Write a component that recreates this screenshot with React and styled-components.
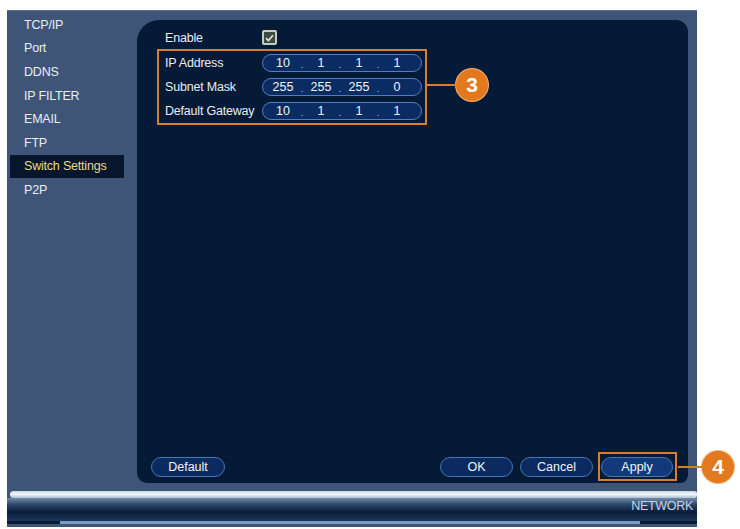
import React from "react";
import styled, { createGlobalStyle } from "styled-components";

const menu = ["TCP/IP", "Port", "DDNS", "IP FILTER", "EMAIL", "FTP", "Switch Settings", "P2P"];

const fields = [
  { label: "IP Address", value: ["10", "1", "1", "1"] },
  { label: "Subnet Mask", value: ["255", "255", "255", "0"] },
  { label: "Default Gateway", value: ["10", "1", "1", "1"] },
];

const GlobalStyle = createGlobalStyle`
  html, body {
    margin: 0;
    padding: 0;
    background: #ffffff;
    font-family: "Liberation Sans", Arial, sans-serif;
    font-size: 12.5px;
  }
`;

const Frame = styled.div`
  position: relative;
  margin: 10px 0 0 7px;
  width: 690px;
  height: 517px;
  display: flex;
  flex-direction: column;
  background: #3f5577;
  box-shadow: inset 0 1px 0 #5a7091;
`;

const Main = styled.div`
  display: flex;
  height: 478px;
`;

const Sidebar = styled.ul`
  list-style: none;
  margin: 0;
  padding: 3px 0 0 3px;
  width: 127px;
`;

const MenuItem = styled.li`
  height: 23.6px;
  width: 114px;
  display: flex;
  align-items: center;
  padding-left: 14px;
  box-sizing: border-box;
  color: ${p => (p.$active ? "#e9dc84" : "#e8edf4")};
  background: ${p => (p.$active ? "#07162d" : "transparent")};
  letter-spacing: -0.2px;
`;

const Panel = styled.div`
  width: 551px;
  margin: 10px 9px 5px 0;
  background: #041a37;
  border-radius: 22px 12px 8px 10px;
  display: flex;
  flex-direction: column;
  padding: 6px 11px 2px 14px;
  box-sizing: border-box;
`;

const Form = styled.div`
  margin-left: 6px;
  display: flex;
  flex-direction: column;
`;

const Row = styled.div`
  display: flex;
  align-items: center;
  height: ${p => p.$h || 24}px;
  padding-left: ${p => p.$indent || 0}px;
`;

const Label = styled.span`
  width: 97px;
  color: #e8edf4;
  letter-spacing: -0.2px;
  white-space: nowrap;
`;

const Mark = styled.div`
  border: 2px solid #d97f2c;
  align-self: flex-start;
  padding: 0 3px 0 6px;
`;

const Check = styled.span`
  width: 15px;
  height: 15px;
  box-sizing: border-box;
  border: 2px solid #c4cdbf;
  border-radius: 2px;
  background: #3d4b47;
  display: flex;
  align-items: center;
  justify-content: center;
`;

const Field = styled.div`
  width: 160px;
  height: 18px;
  box-sizing: border-box;
  border: 1.5px solid #5080c0;
  border-radius: 9px;
  background: #0b2b63;
  display: flex;
  align-items: center;
  padding-left: 5px;
  color: #f2f5fa;
`;

const Octet = styled.span`
  width: 30px;
  text-align: center;
`;

const Dot = styled.span`
  width: 8px;
  text-align: center;
  color: #9fb2d0;
  font-size: 11px;
  position: relative;
  top: 1px;
`;

const Filler = styled.div`
  flex: 1;
`;

const Buttons = styled.div`
  display: flex;
  align-items: center;
  height: 29px;
`;

const Button = styled.button`
  width: ${p => p.$w || 74}px;
  height: 20px;
  border: 1.5px solid #4a75b0;
  border-radius: 10px;
  background: ${p => (p.$primary ? "#123a7a" : "#0b2a60")};
  color: #f2f5fa;
  font-family: "Liberation Sans", Arial, sans-serif;
  font-size: 12.5px;
  padding: 0;
  margin-left: ${p => p.$gap || 0}px;
`;

const ApplyMark = styled.div`
  margin-left: 5px;
  border: 2px solid #d97f2c;
  padding: 2.5px 2px 2.5px 1px;
  display: flex;
`;

const Footer = styled.div`
  position: relative;
  flex: 1;
  display: flex;
  flex-direction: column;
  padding-top: 3px;
`;

const Shine = styled.div`
  height: 7px;
  margin: 0 0 0 3px;
  border-radius: 4px 3px 3px 4px;
  background: linear-gradient(#c9d5e3, #f4f7fb 45%, #aebfd3);
`;

const Band = styled.div`
  height: 23px;
  display: flex;
  align-items: center;
  justify-content: flex-end;
  background: linear-gradient(#7189a9, #2a4467 30%, #0a1c38 62%, #1d375c);
  color: #c9d4e4;
  letter-spacing: -0.3px;
  padding: 0 4px 7px 0;
  box-sizing: border-box;
`;

const Rule = styled.div`
  height: 3px;
  background: linear-gradient(90deg, #0a1a30 0 53px, #7d9cc5 53px 633px, #0a1a30 633px);
`;

const Callout = styled.div`
  position: absolute;
  left: ${p => p.$x}px;
  top: ${p => p.$y}px;
  width: 32px;
  height: 32px;
  border-radius: 50%;
  background: #e2791f;
  box-shadow: 0 0 0 1px #f3b276;
  color: #ffffff;
  font-weight: bold;
  font-size: 21px;
  display: flex;
  align-items: center;
  justify-content: center;

  &::before {
    content: "";
    position: absolute;
    right: 100%;
    top: 15px;
    width: ${p => p.$line}px;
    height: 2px;
    background: #d97f2c;
  }
`;

const CheckIcon = () => (
  <svg width="9" height="8" viewBox="0 0 9 8">
    <path d="M1 4.2 L3.4 6.5 L8 1.2" fill="none" stroke="#e4ecdc" strokeWidth="1.6" />
  </svg>
);

const IpField = ({ value }) => (
  <Field>
    {value.map((v, i) => (
      <React.Fragment key={i}>
        {i > 0 && <Dot>.</Dot>}
        <Octet>{v}</Octet>
      </React.Fragment>
    ))}
  </Field>
);

export default function App() {
  return (
    <>
      <GlobalStyle />
      <Frame>
        <Main>
          <Sidebar>
            {menu.map(m => (
              <MenuItem key={m} $active={m === "Switch Settings"}>{m}</MenuItem>
            ))}
          </Sidebar>
          <Panel>
            <Form>
              <Row $h={23} $indent={8}>
                <Label>Enable</Label>
                <Check><CheckIcon /></Check>
              </Row>
              <Mark>
                {fields.map(f => (
                  <Row key={f.label}>
                    <Label>{f.label}</Label>
                    <IpField value={f.value} />
                  </Row>
                ))}
              </Mark>
            </Form>
            <Filler />
            <Buttons>
              <Button>Default</Button>
              <Button $gap={215} $w={73}>OK</Button>
              <Button $gap={7} $w={73}>Cancel</Button>
              <ApplyMark>
                <Button $primary $w={72}>Apply</Button>
              </ApplyMark>
            </Buttons>
          </Panel>
        </Main>
        <Footer>
          <Shine />
          <Band>NETWORK</Band>
          <Rule />
        </Footer>
        <Callout $x={449} $y={59} $line={29}>3</Callout>
        <Callout $x={695} $y={441} $line={24}>4</Callout>
      </Frame>
    </>
  );
}
